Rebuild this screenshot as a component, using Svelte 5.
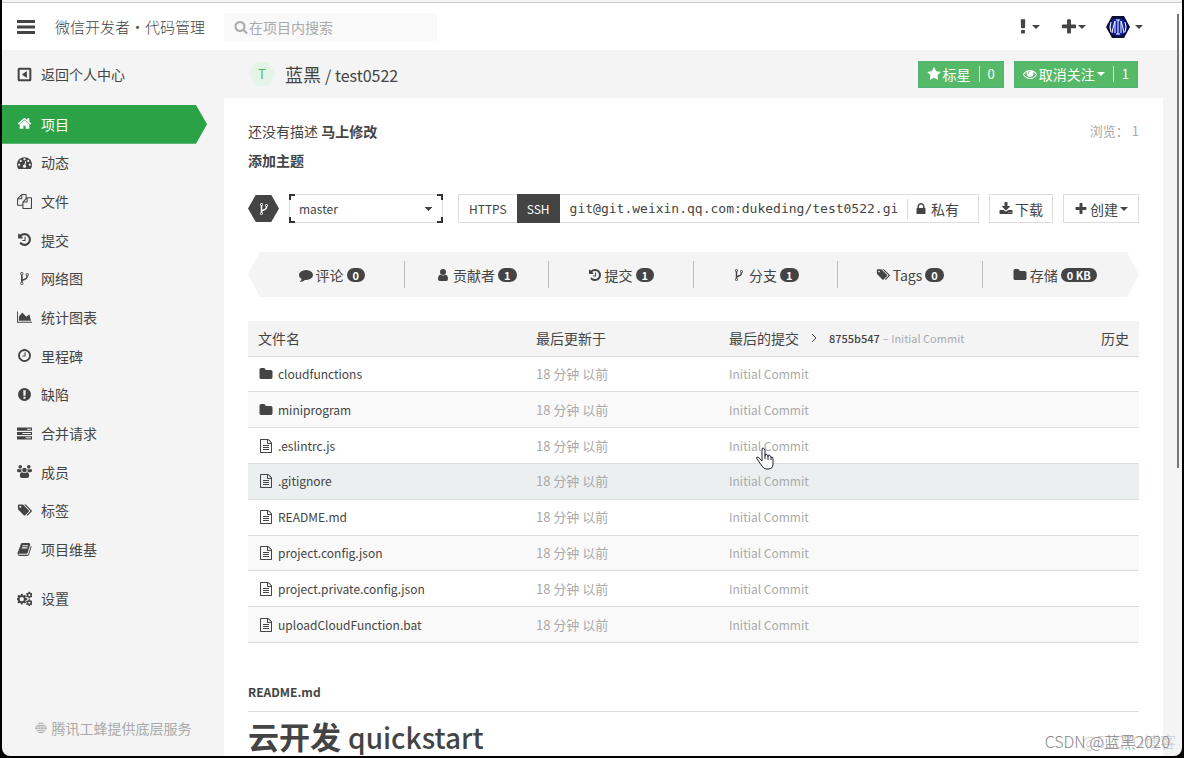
<script lang="ts">
    const icons = {
        home: 'M1472 992v480q0 26-19 45t-45 19h-384v-384h-256v384h-384q-26 0-45-19t-19-45v-480q0-1 .5-3t.5-3l575-474 575 474q1 2 1 6zm223-69l-62 74q-8 9-21 11h-3q-13 0-21-7l-692-577-692 577q-12 8-24 7-13-2-21-11l-62-74q-8-10-7-23.5t11-21.5l719-599q32-26 76-26t76 26l244 204v-195q0-14 9-23t23-9h192q14 0 23 9t9 23v408l219 182q10 8 11 21.5t-7 23.5z',
        dashboard: 'M384 1152q0-53-37.5-90.5t-90.5-37.5-90.5 37.5-37.5 90.5 37.5 90.5 90.5 37.5 90.5-37.5 37.5-90.5zm192-448q0-53-37.5-90.5t-90.5-37.5-90.5 37.5-37.5 90.5 37.5 90.5 90.5 37.5 90.5-37.5 37.5-90.5zm428 481l101-382q6-26-7.5-48.5t-38.5-29.5-48 6.5-30 39.5l-101 382q-60 5-107 43.5t-63 98.5q-20 77 20 146t117 89 146-20 89-117q16-60-6-117t-72-91zm660-33q0-53-37.5-90.5t-90.5-37.5-90.5 37.5-37.5 90.5 37.5 90.5 90.5 37.5 90.5-37.5 37.5-90.5zm-640-640q0-53-37.5-90.5t-90.5-37.5-90.5 37.5-37.5 90.5 37.5 90.5 90.5 37.5 90.5-37.5 37.5-90.5zm448 192q0-53-37.5-90.5t-90.5-37.5-90.5 37.5-37.5 90.5 37.5 90.5 90.5 37.5 90.5-37.5 37.5-90.5zm320 448q0 261-141 483-19 29-54 29h-1402q-35 0-54-29-141-221-141-483 0-182 71-348t191-286 286-191 348-71 348 71 286 191 191 286 71 348z',
        files: 'M1696 384q40 0 68 28t28 68v1216q0 40-28 68t-68 28h-960q-40 0-68-28t-28-68v-288h-544q-40 0-68-28t-28-68v-672q0-40 20-88t48-76l408-408q28-28 76-48t88-20h416q40 0 68 28t28 68v328q68-40 128-40h416zm-544 213l-299 299h299v-299zm-640-384l-299 299h299v-299zm196 647l316-316v-416h-384v416q0 40-28 68t-68 28h-416v640h512v-256q0-40 20-88t48-76zm956 804v-1152h-384v416q0 40-28 68t-68 28h-416v640h896z',
        history: 'M1664 896q0 156-61 298t-164 245-245 164-298 61q-172 0-327-72.5t-264-204.5q-7-10-6.5-22.5t8.5-20.5l137-138q10-9 25-9 16 2 23 12 73 95 179 147t225 52q104 0 198.5-40.5t163.5-109.5 109.5-163.5 40.5-198.5-40.5-198.5-109.5-163.5-163.5-109.5-198.5-40.5q-98 0-188 35.5t-160 101.5l137 138q31 30 14 69-17 40-59 40h-448q-26 0-45-19t-19-45v-448q0-42 40-59 39-17 69 14l130 129q107-101 244.5-156.5t284.5-55.5q156 0 298 61t245 164 164 245 61 298zm-640-288v448q0 14-9 23t-23 9h-320q-14 0-23-9t-9-23v-64q0-14 9-23t23-9h224v-352q0-14 9-23t23-9h64q14 0 23 9t9 23z',
        fork: 'M672 1472q0-40-28-68t-68-28-68 28-28 68 28 68 68 28 68-28 28-68zm0-1152q0-40-28-68t-68-28-68 28-28 68 28 68 68 28 68-28 28-68zm640 128q0-40-28-68t-68-28-68 28-28 68 28 68 68 28 68-28 28-68zm96 0q0 52-26 96.5t-70 69.5q-2 287-226 414-67 38-203 81-128 40-169.5 71t-41.5 100v26q44 25 70 69.5t26 96.5q0 80-56 136t-136 56-136-56-56-136q0-52 26-96.5t70-69.5v-820q-44-25-70-69.5t-26-96.5q0-80 56-136t136-56 136 56 56 136q0 52-26 96.5t-70 69.5v497q54-26 154-57 55-17 87.5-29.5t70.5-31 59-39.5 40.5-51 28-69.5 8.5-91.5q-44-25-70-69.5t-26-96.5q0-80 56-136t136-56 136 56 56 136z',
        chart: 'M1792 1408v112h-1792v-1344h112v1232h1680zm-336-896l224 784h-1456v-504l392-504 504 504z',
        clock: 'M1024 544v448q0 14-9 23t-23 9h-320q-14 0-23-9t-9-23v-64q0-14 9-23t23-9h224v-352q0-14 9-23t23-9h64q14 0 23 9t9 23zm416 352q0-148-73-273t-198-198-273-73-273 73-198 198-73 273 73 273 198 198 273 73 273-73 198-198 73-273zm224 0q0 209-103 385.5t-279.5 279.5-385.5 103-385.5-103-279.5-279.5-103-385.5 103-385.5 279.5-279.5 385.5-103 385.5 103 279.5 279.5 103 385.5z',
        issue: 'M896 128q209 0 385.5 103t279.5 279.5 103 385.5-103 385.5-279.5 279.5-385.5 103-385.5-103-279.5-279.5-103-385.5 103-385.5 279.5-279.5 385.5-103zm128 1247v-190q0-14-9-23.5t-22-9.5h-192q-13 0-23 10t-10 23v190q0 13 10 23t23 10h192q13 0 22-9.5t9-23.5zm-2-344l18-621q0-12-10-18-10-8-24-8h-220q-14 0-24 8-10 6-10 18l17 621q0 10 10 17.5t24 7.5h185q14 0 23.5-7.5t10.5-17.5z',
        tasks: 'M0 192h1792v384h-1792zM1216 320v128h448v-128zM0 704h1792v384h-1792zM640 832v128h1024v-128zM0 1216h1792v384h-1792zM1024 1344v128h640v-128z',
        users: 'M896 448a270 270 0 1 1 0 540a270 270 0 1 1 0-540zM384 128a215 215 0 1 1 0 430a215 215 0 1 1 0-430zM1408 128a215 215 0 1 1 0 430a215 215 0 1 1 0-430zM0 850q0-250 120-270 260 130 440 0-70 160 10 310-110 20-190 100h-220q-160-10-160-140zM1792 850q0-250-120-270-260 130-440 0 70 160-10 310 110 20 190 100h220q160-10 160-140zM340 1440q0-420 250-440 306 170 612 0 250 20 250 440 0 224-240 224h-632q-240 0-240-224z',
        tags: 'M504 448q0-46-33-79t-79-33-79 33-33 79 33 79 79 33 79-33 33-79zm933 504q0 46-32 79l-430 430q-34 33-79 33-47 0-79-33l-626-626q-33-33-56-89t-23-102v-364q0-46 33-79t79-33h364q46 0 102 23t90 56l625 625q32 34 32 80zm336 0q0 46-32 79l-430 430q-34 33-79 33-32 0-52-12t-46-40l411-411q32-32 32-79 0-46-32-80l-625-625q-34-33-90-56t-102-23h196q46 0 102 23t90 56l625 625q32 34 32 80z',
        book: 'M1703 478q40 57 18 129l-275 906q-19 64-76.5 107.5t-122.5 43.5h-923q-77 0-148.5-53.5t-99.5-131.5q-24-67-2-127 0-4 3-27t4-37q1-8-3-21.5t-3-19.5q2-11 8-21t16.5-23.5 16.5-23.5q23-38 45-91.5t30-91.5q3-10 .5-30t-.5-28q3-11 17-28t17-23q21-36 42-92t25-90q1-9-2.5-32t.5-28q4-13 22-30.5t22-22.5q19-26 42.5-84.5t27.5-96.5q1-8-3-25.5t-2-26.5q2-8 9-18t18-23 17-21q8-12 16.5-30.5t15-35 16-36 19.5-32 26.5-23.5 36-11.5 47.5 5.5l-1 3q38-9 51-9h761q74 0 114 56t18 130l-274 906q-36 119-71.5 153.5t-128.5 34.5h-869q-27 0-38 15-11 16-1 43 24 70 144 70h923q29 0 56-15.5t35-41.5l300-987q7-22 5-57 38 15 59 43zm-1064 2q-4 13 2 22.5t20 9.5h608q13 0 25.5-9.5t16.5-22.5l21-64q4-13-2-22.5t-20-9.5h-608q-13 0-25.5 9.5t-16.5 22.5zm-83 256q-4 13 2 22.5t20 9.5h608q13 0 25.5-9.5t16.5-22.5l21-64q4-13-2-22.5t-20-9.5h-608q-13 0-25.5 9.5t-16.5 22.5z',
        cogs: 'M470 330h200l30 170 110 46 142-98 140 140-98 142 46 110 170 30v200l-170 30-46 110 98 142-140 140-142-98-110 46-30 170h-200l-30-170-110-46-142 98-140-140 98-142-46-110-170-30v-200l170-30 46-110-98-142 140-140 142 98 110-46zM570 710a260 260 0 1 0 0 520a260 260 0 1 0 0-520zM1400 90h140l30 100 120 60 100-20 70 120-80 80v120l80 80-70 120-100-20-120 60-30 100h-140l-30-100-110-60-110 20-70-120 80-80v-120l-80-80 70-120 110 20 110-60zM1470 360a130 130 0 1 0 0 260a130 130 0 1 0 0-260zM1400 1000h140l30 100 120 60 100-20 70 120-80 80v120l80 80-70 120-100-20-120 60-30 100h-140l-30-100-110-60-110 20-70-120 80-80v-120l-80-80 70-120 110 20 110-60zM1470 1270a130 130 0 1 0 0 260a130 130 0 1 0 0-260z',
        back: 'M270 78h1252q192 0 192 192v1252q0 192-192 192h-1252q-192 0-192-192v-1252q0-192 192-192zM320 320v1152h1152v-1152zM1180 490v812l-600-406z',
        comment: 'M1792 896q0 174-120 321.5t-326 233-450 85.5q-70 0-145-8-198 175-460 242-49 14-114 22-17 2-30.5-9t-17.5-29v-1q-3-4-.5-12t2-10 4.5-9.5l6-9 7-8.5 8-9q7-8 31-34.5t34.5-38 31-39.5 32.5-51 27-59 26-76q-157-89-247.5-220t-90.5-281q0-130 71-248.5t191-204.5 286-136.5 348-50.5q244 0 450 85.5t326 233 120 321.5z',
        user: 'M896 128a384 384 0 1 1 0 768a384 384 0 1 1 0-768zM256 1405q0-500 330-530 310 200 620 0 330 30 330 530 0 260-224 260h-832q-224 0-224-260z',
        folder: 'M1728 608v704q0 92-66 158t-158 66h-1216q-92 0-158-66t-66-158v-960q0-92 66-158t158-66h320q92 0 158 66t66 158v32h672q92 0 158 66t66 158z',
        file: 'M1596 380q28 28 48 76t20 88v1152q0 40-28 68t-68 28h-1344q-40 0-68-28t-28-68v-1600q0-40 28-68t68-28h896q40 0 88 20t76 48zm-444-244v376h376q-10-29-22-41l-313-313q-12-12-41-22zm384 1528v-1024h-416q-40 0-68-28t-28-68v-416h-768v1536h1280zm-1024-864q0-14 9-23t23-9h704q14 0 23 9t9 23v64q0 14-9 23t-23 9h-704q-14 0-23-9t-9-23v-64zm736 224q14 0 23 9t9 23v64q0 14-9 23t-23 9h-704q-14 0-23-9t-9-23v-64q0-14 9-23t23-9h704zm0 256q14 0 23 9t9 23v64q0 14-9 23t-23 9h-704q-14 0-23-9t-9-23v-64q0-14 9-23t23-9h704z',
        lock: 'M640 768h512v-192q0-106-75-181t-181-75-181 75-75 181v192zm832 96v576q0 40-28 68t-68 28h-960q-40 0-68-28t-28-68v-576q0-40 28-68t68-28h32v-192q0-184 132-316t316-132 316 132 132 316v192h32q40 0 68 28t28 68z',
        download: 'M1344 1344q0-26-19-45t-45-19-45 19-19 45 19 45 45 19 45-19 19-45zm256 0q0-26-19-45t-45-19-45 19-19 45 19 45 45 19 45-19 19-45zm128-224v320q0 40-28 68t-68 28h-1472q-40 0-68-28t-28-68v-320q0-40 28-68t68-28h465l135 136q58 56 136 56t136-56l136-136h464q40 0 68 28t28 68zm-325-569q17 41-14 70l-448 448q-18 19-45 19t-45-19l-448-448q-31-29-14-70 17-39 59-39h256v-448q0-26 19-45t45-19h256q26 0 45 19t19 45v448h256q42 0 59 39z',
        plus: 'M1600 736v192q0 40-28 68t-68 28h-416v416q0 40-28 68t-68 28h-192q-40 0-68-28t-28-68v-416h-416q-40 0-68-28t-28-68v-192q0-40 28-68t68-28h416v-416q0-40 28-68t68-28h192q40 0 68 28t28 68v416h416q40 0 68 28t28 68z',
        search: 'M1216 832q0-185-131.5-316.5t-316.5-131.5-316.5 131.5-131.5 316.5 131.5 316.5 316.5 131.5 316.5-131.5 131.5-316.5zm512 832q0 52-38 90t-90 38q-54 0-90-38l-343-342q-179 124-399 124-143 0-273.5-55.5t-225-150-150-225-55.5-273.5 55.5-273.5 150-225 225-150 273.5-55.5 273.5 55.5 225 150 150 225 55.5 273.5q0 220-124 399l343 343q37 37 37 90z',
        star: 'M1728 647q0 22-26 48l-363 354 86 500q1 7 1 20 0 21-10.5 35.5t-30.5 14.5q-19 0-40-12l-449-236-449 236q-22 12-40 12-21 0-31.5-14.5t-10.5-35.5q0-6 2-20l86-500-364-354q-25-27-25-48 0-37 56-46l502-73 225-455q19-41 49-41t49 41l225 455 502 73q56 9 56 46z',
        eye: 'M1664 960q-152-236-381-353 61 104 61 225 0 185-131.5 316.5t-316.5 131.5-316.5-131.5-131.5-316.5q0-121 61-225-229 117-381 353 133 205 333.5 326.5t434.5 121.5 434.5-121.5 333.5-326.5zm-720-384q0-20-14-34t-34-14q-125 0-214.5 89.5t-89.5 214.5q0 20 14 34t34 14 34-14 14-34q0-86 61-147t147-61q20 0 34-14t14-34zm848 384q0 34-20 69-140 230-376.5 368.5t-499.5 138.5-499.5-139-376.5-368q-20-35-20-69t20-69q140-229 376.5-368t499.5-139 499.5 139 376.5 368q20 35 20 69z',
        exclamation: 'M1088 1248v224q0 26-19 45t-45 19h-256q-26 0-45-19t-19-45v-224q0-26 19-45t45-19h256q26 0 45 19t19 45zm30-1056l-28 768q-1 26-20.5 45t-45.5 19h-256q-26 0-45.5-19t-20.5-45l-28-768q-1-26 17.5-45t44.5-19h320q26 0 44.5 19t17.5 45z',
        bars: 'M0 200h1792v300h-1792zM0 746h1792v300h-1792zM0 1292h1792v300h-1792z',
        bee: 'M500 128h792v150h-792zM250 400h1292v150h-1292zM0 672h1792v150h-1792zM0 944h1792v150h-1792zM250 1216h1292v150h-1292zM500 1488h792v150h-792z'
    };

    const menu = [
        { icon: 'home', text: '项目', active: true },
        { icon: 'dashboard', text: '动态' },
        { icon: 'files', text: '文件' },
        { icon: 'history', text: '提交' },
        { icon: 'fork', text: '网络图' },
        { icon: 'chart', text: '统计图表' },
        { icon: 'clock', text: '里程碑' },
        { icon: 'issue', text: '缺陷' },
        { icon: 'tasks', text: '合并请求' },
        { icon: 'users', text: '成员' },
        { icon: 'tags', text: '标签' },
        { icon: 'book', text: '项目维基' }
    ];

    const stats = [
        { icon: 'comment', text: '评论', count: '0' },
        { icon: 'user', text: '贡献者', count: '1' },
        { icon: 'history', text: '提交', count: '1' },
        { icon: 'fork', text: '分支', count: '1' },
        { icon: 'tags', text: 'Tags', count: '0' },
        { icon: 'folder', text: '存储', count: '0 KB' }
    ];

    const files = [
        { name: 'cloudfunctions', icon: 'folder' },
        { name: 'miniprogram', icon: 'folder' },
        { name: '.eslintrc.js', icon: 'file', pointer: true },
        { name: '.gitignore', icon: 'file', hover: true },
        { name: 'README.md', icon: 'file' },
        { name: 'project.config.json', icon: 'file' },
        { name: 'project.private.config.json', icon: 'file' },
        { name: 'uploadCloudFunction.bat', icon: 'file' }
    ];

    let cloneUrl = 'git@git.weixin.qq.com:dukeding/test0522.gi';
</script>

<svelte:head>
    <title>蓝黑 / test0522</title>
</svelte:head>

{#snippet icon(name, size = '')}
    <svg class="icon {size}" viewBox="0 0 1792 1792" aria-hidden="true">
        <path fill-rule="evenodd" d={icons[name]} />
    </svg>
{/snippet}

<div class="window">
    <header>
        <button class="plain burger" aria-label="菜单">{@render icon('bars', 'large')}</button>
        <a class="brand" href="#home">微信开发者・代码管理</a>
        <label class="search">
            {@render icon('search')}
            <input type="search" placeholder="在项目内搜索" aria-label="在项目内搜索" />
        </label>
        <nav class="tools">
            <button class="plain" aria-label="帮助">{@render icon('exclamation', 'large')}<i class="caret"></i></button>
            <button class="plain" aria-label="新建">{@render icon('plus', 'large')}<i class="caret"></i></button>
            <button class="plain avatar" aria-label="账户">
                <svg viewBox="0 0 24 22" aria-hidden="true">
                    <path d="M6 0h12l6 11-6 11H6L0 11z" fill="#0a0d2c" />
                    <circle cx="12" cy="11" r="9" fill="#101fa8" />
                    <path
                        d="M10 4h4M10 18h4M12 4v14M9 5v12M15 5v12M9 5q-2 6-3 12M15 5q2 6 3 12M5 6q-2 5 0 10M19 6q2 5 0 10"
                        fill="none"
                        stroke="#fff"
                    />
                </svg>
                <i class="caret"></i>
            </button>
        </nav>
    </header>

    <div class="body">
        <aside>
            <a class="item back" href="#back">{@render icon('back')}返回个人中心</a>
            <nav class="menu">
                {#each menu as item}
                    <a class="item" class:active={item.active} href="#{item.icon}">{@render icon(item.icon)}{item.text}</a>
                {/each}
            </nav>
            <a class="item settings" href="#settings">{@render icon('cogs')}设置</a>
            <p class="provider">{@render icon('bee', 'small')}腾讯工蜂提供底层服务</p>
        </aside>

        <main>
            <div class="title">
                <span class="badge">T</span>
                <h1>蓝黑 <span>/ test0522</span></h1>
                <button class="green">{@render icon('star')}标星<span class="num">0</span></button>
                <button class="green">{@render icon('eye')}取消关注<i class="caret"></i><span class="num">1</span></button>
            </div>

            <div class="content">
                <div class="desc">
                    <span>还没有描述 <a href="#edit">马上修改</a></span>
                    <span class="views">浏览： 1</span>
                </div>
                <a class="topic" href="#topic">添加主题</a>

                <div class="toolbar">
                    <span class="hexagon">{@render icon('fork')}</span>
                    <select aria-label="分支">
                        <option>master</option>
                    </select>
                    <div class="clone">
                        <button>HTTPS</button>
                        <button class="selected">SSH</button>
                        <input type="text" readonly value={cloneUrl} aria-label="仓库地址" />
                        <span class="private">{@render icon('lock')}私有</span>
                    </div>
                    <button class="white">{@render icon('download')}下载</button>
                    <button class="white create">{@render icon('plus')}创建<i class="caret"></i></button>
                </div>

                <div class="stats">
                    {#each stats as stat}
                        <a href="#{stat.icon}">{@render icon(stat.icon)}{stat.text}<b>{stat.count}</b></a>
                    {/each}
                </div>

                <table>
                    <thead>
                        <tr>
                            <th class="name">文件名</th>
                            <th class="time">最后更新于</th>
                            <th>
                                <div class="last">
                                    最后的提交
                                    <svg class="arrow" viewBox="0 0 6 10" aria-hidden="true"><path d="M1 1l4 4-4 4" /></svg>
                                    <a href="#commit">8755b547</a>
                                    <small>– Initial Commit</small>
                                    <a class="log" href="#log">历史</a>
                                </div>
                            </th>
                        </tr>
                    </thead>
                    <tbody>
                        {#each files as file}
                            <tr class:hover={file.hover}>
                                <td class="name"><a href="#{file.name}">{@render icon(file.icon)}{file.name}</a></td>
                                <td class="muted">18 分钟 以前</td>
                                <td class="muted message">
                                    Initial Commit
                                    {#if file.pointer}
                                        <svg class="pointer" viewBox="0 0 18 23" aria-hidden="true">
                                            <path d="M6 14V3q0-2 1-2t2 2v6q0-2 1-2t2 2v1q0-2 1-2t2 2v1q0-1 1-1t1 2v5q0 5-5 5h-2q-2 0-4-3l-5-7q-1-2 0-2 2 0 3 2z" />
                                            <path d="M9 9v3M12 10v3M15 11v2" />
                                        </svg>
                                    {/if}
                                </td>
                            </tr>
                        {/each}
                    </tbody>
                </table>

                <section class="readme">
                    <h2>README.md</h2>
                    <h3>云开发 <span>quickstart</span></h3>
                </section>
            </div>
        </main>
    </div>

    <div class="scrollbar"></div>
    <span class="watermark under">@51CTO博客</span>
    <span class="watermark">CSDN @蓝黑2020</span>
</div>

<style>
    :global(body) {
        background: #000;
    }

    .window,
    button,
    input,
    select {
        font-family: 'Noto Sans CJK SC', sans-serif;
        font-size: 14px;
        color: #444;
    }

    .window {
        position: relative;
        display: flex;
        flex-direction: column;
        box-sizing: border-box;
        height: calc(100vh - 2px);
        margin: 0 2px;
        overflow: hidden;
        border-radius: 0 0 8px 8px;
        background: #f4f4f4;
        line-height: 20px;
    }

    a {
        color: inherit;
        text-decoration: none;
    }

    button {
        display: flex;
        align-items: center;
        cursor: pointer;
    }

    .icon {
        flex: none;
        width: 14px;
        height: 14px;
        fill: currentColor;
    }

    .icon.large {
        width: 18px;
        height: 18px;
    }

    .icon.small {
        width: 12px;
        height: 12px;
    }

    .caret {
        border: 4px solid transparent;
        border-top-color: currentColor;
        border-bottom: 0;
    }

    header {
        flex: none;
        display: flex;
        align-items: center;
        height: 47px;
        margin-top: 2px;
        padding: 0 39px 0 15px;
        border-top: 1px solid #ccc;
        background: #fff;
    }

    .plain {
        padding: 0;
        border: 0;
        background: none;
    }

    .burger {
        width: 38px;
    }

    .brand {
        width: 169px;
        font-size: 15px;
        font-weight: 300;
    }

    .search {
        display: flex;
        align-items: center;
        gap: 1px;
        width: 203px;
        height: 28px;
        padding-left: 10px;
        background: #f9f9f9;
        color: #aaa;
    }

    .search input {
        flex: 1;
        min-width: 0;
        padding: 0;
        border: 0;
        outline: 0;
        background: none;
    }

    .search input::placeholder {
        color: #aaa;
    }

    .tools {
        display: flex;
        gap: 20px;
        margin-left: auto;
    }

    .avatar {
        gap: 5px;
    }

    .avatar svg {
        width: 24px;
        height: 22px;
    }

    .body {
        flex: 1;
        display: flex;
        min-height: 0;
    }

    aside {
        flex: none;
        display: flex;
        flex-direction: column;
        width: 222px;
    }

    .menu {
        flex: none;
        display: grid;
        grid-template-rows: repeat(12, 1fr);
        height: 464px;
    }

    .item {
        display: flex;
        align-items: center;
        gap: 9px;
        width: 190px;
        padding: 0 0 1px 15px;
    }

    .item .icon {
        width: 15px;
        height: 15px;
    }

    .back {
        height: 38px;
        margin: 5px 0 11px;
    }

    .active {
        background: #2ba245;
        clip-path: polygon(0 0, 194px 0, 100% 50%, 194px 100%, 0 100%);
        color: #fff;
    }

    .settings {
        height: 38px;
        margin-top: 10px;
    }

    .provider {
        display: flex;
        align-items: center;
        justify-content: center;
        gap: 5px;
        margin: auto 0 18px;
        color: #aaa;
    }

    main {
        flex: 1;
        display: flex;
        flex-direction: column;
        min-width: 0;
        margin-right: 19px;
    }

    .title {
        flex: none;
        display: flex;
        align-items: center;
        gap: 10px;
        height: 48px;
        padding: 0 25px;
    }

    .badge {
        width: 26px;
        line-height: 24px;
        background: #e4f5e7;
        clip-path: polygon(25% 0, 75% 0, 100% 50%, 75% 100%, 25% 100%, 0 50%);
        color: #55b96a;
        font-size: 13px;
        text-align: center;
    }

    h1 {
        flex: 1;
        margin: 0;
        font-size: 18px;
        font-weight: 400;
    }

    h1 span {
        font-size: 16px;
    }

    .green {
        gap: 2px;
        height: 27px;
        padding: 0 8px;
        border: 1px solid #4fb37c;
        background: #55b968;
        color: #fff;
    }

    .green .num {
        margin-left: 6px;
        padding-left: 8px;
        border-left: 1px solid #d5efd9;
        font-size: 13px;
        line-height: 16px;
    }

    .content {
        flex: 1;
        min-height: 0;
        padding: 23px 24px 0;
        background: #fff;
    }

    .desc {
        display: flex;
        justify-content: space-between;
    }

    .desc a,
    .topic {
        font-weight: 700;
    }

    .topic {
        display: block;
        margin-top: 9px;
    }

    .views {
        color: #aaa;
        font-size: 13px;
    }

    .toolbar {
        display: flex;
        align-items: center;
        gap: 10px;
        margin: 24px 0 29px;
    }

    .hexagon {
        display: flex;
        align-items: center;
        justify-content: center;
        width: 31px;
        height: 27px;
        background: #444;
        clip-path: polygon(25% 0, 75% 0, 100% 50%, 75% 100%, 25% 100%, 0 50%);
        color: #fff;
    }

    select {
        --dark: linear-gradient(#333, #333);
        --pale: linear-gradient(#ddd, #ddd);
        width: 154px;
        height: 29px;
        margin-right: 5px;
        padding: 0 10px;
        appearance: none;
        border: 0;
        border-radius: 0;
        background:
            var(--dark) 0 0 / 6px 2px,
            var(--dark) 0 0 / 2px 6px,
            var(--dark) 100% 0 / 6px 2px,
            var(--dark) 100% 0 / 2px 6px,
            var(--dark) 0 100% / 6px 2px,
            var(--dark) 0 100% / 2px 6px,
            var(--dark) 100% 100% / 6px 2px,
            var(--dark) 100% 100% / 2px 6px,
            var(--pale) 0 0 / 100% 1px,
            var(--pale) 0 100% / 100% 1px,
            var(--pale) 0 0 / 1px 100%,
            var(--pale) 100% 0 / 1px 100%,
            linear-gradient(to bottom left, #444 50%, transparent 50%) 136px 13px / 4px 4px,
            linear-gradient(to bottom right, #444 50%, transparent 50%) 140px 13px / 4px 4px;
        background-repeat: no-repeat;
        font-size: 12px;
    }

    .clone {
        flex: 1;
        display: flex;
        align-items: center;
        box-sizing: border-box;
        min-width: 0;
        height: 29px;
        border: 1px solid #ddd;
    }

    .clone button {
        height: 29px;
        padding: 0 10px;
        border: 0;
        background: none;
        font-size: 12px;
    }

    .clone .selected {
        background: #444;
        color: #fff;
    }

    .clone input {
        flex: 1;
        min-width: 0;
        padding: 0 0 0 10px;
        border: 0;
        outline: 0;
        font-family: 'DejaVu Sans Mono', monospace;
        font-size: 13px;
    }

    .private {
        display: flex;
        align-items: center;
        gap: 3px;
        padding: 0 19px 0 6px;
        border-left: 1px solid #ddd;
    }

    .white {
        gap: 2px;
        height: 29px;
        padding: 0 9px;
        border: 1px solid #ddd;
        background: #fff;
    }

    .create {
        padding: 0 10px;
    }

    .stats {
        display: grid;
        grid-template-columns: repeat(6, 1fr);
        padding: 9px 12px;
        background: #f4f4f4;
        clip-path: polygon(12px 0, calc(100% - 12px) 0, 100% 50%, calc(100% - 12px) 100%, 12px 100%, 0 50%);
    }

    .stats a {
        display: flex;
        align-items: center;
        justify-content: center;
        gap: 3px;
        height: 27px;
        border-right: 1px solid #bbb;
    }

    .stats a:last-child {
        border-right: 0;
    }

    .stats b {
        padding: 0 6px;
        border-radius: 7px;
        background: #444;
        color: #fff;
        font-size: 11px;
        line-height: 14px;
    }

    table {
        width: 100%;
        height: 322px;
        margin-top: 24px;
        border-collapse: collapse;
        table-layout: fixed;
    }

    th,
    td {
        box-sizing: border-box;
        height: 35px;
        padding: 0;
        border-bottom: 1px solid #ddd;
        text-align: left;
    }

    th {
        background: #f4f4f4;
        font-weight: 400;
    }

    th.name {
        width: 288px;
        padding-left: 10px;
    }

    th.time {
        width: 193px;
    }

    .last {
        display: flex;
        align-items: center;
        padding-right: 10px;
    }

    .last a {
        font-size: 11px;
        font-weight: 500;
    }

    .last .log {
        margin-left: auto;
        font-size: 14px;
        font-weight: 400;
    }

    .arrow {
        width: 6px;
        height: 10px;
        margin: 0 12px;
        fill: none;
        stroke: #444;
    }

    small {
        margin-left: 3px;
        color: #aaa;
        font-size: 11px;
    }

    td.name a {
        display: flex;
        align-items: center;
        gap: 5px;
        padding-left: 11px;
        font-size: 12px;
    }

    tbody tr:nth-child(even) {
        background: #f9f9f9;
    }

    tbody tr.hover {
        background: #ebeff0;
    }

    .muted {
        color: #aaa;
        font-size: 13px;
    }

    .message {
        position: relative;
        font-size: 12px;
    }

    .pointer {
        position: absolute;
        top: 19px;
        left: 27px;
        width: 18px;
        height: 23px;
        fill: #fff;
        stroke: #223;
    }

    .readme h2 {
        margin: 39px 0 0;
        padding-bottom: 9px;
        border-bottom: 1px solid #ddd;
        font-size: 12px;
        font-weight: 700;
    }

    .readme h3 {
        margin: 6px 0 0;
        font-size: 31px;
        font-weight: 700;
        line-height: 36px;
    }

    .readme h3 span {
        font-size: 28px;
        font-weight: 500;
    }

    .scrollbar {
        position: absolute;
        top: 14px;
        right: 3px;
        width: 2px;
        height: 60%;
        background: #777;
    }

    .watermark {
        position: absolute;
        right: 12px;
        bottom: 5px;
        color: #888;
        font-size: 16px;
        font-weight: 300;
    }

    .watermark.under {
        right: 6px;
        color: #ccc;
    }
</style>
